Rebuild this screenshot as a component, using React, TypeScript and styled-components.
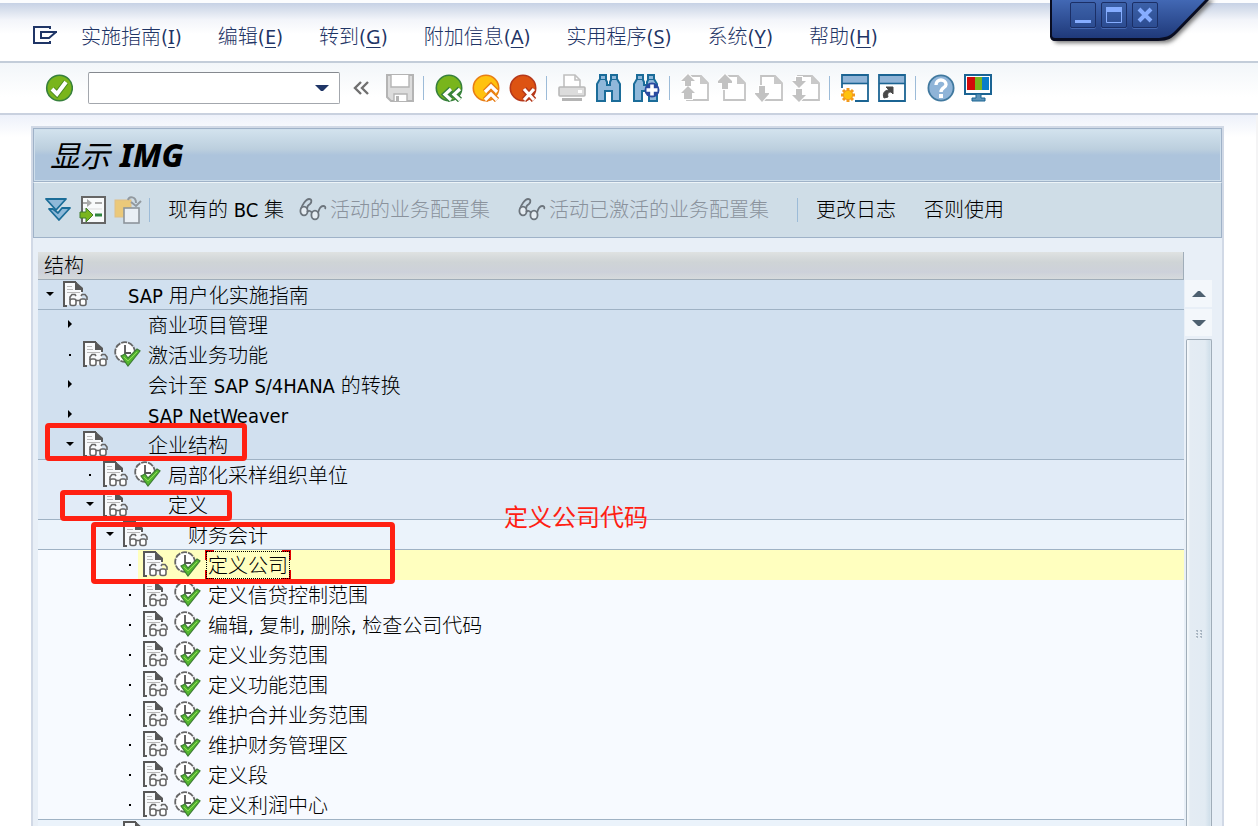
import React from 'react';
import styled, { createGlobalStyle, css } from 'styled-components';

const GlobalStyle = createGlobalStyle`
  * { box-sizing: border-box; }
  body { margin: 0; background: #fff; }
  button {
    font: inherit; color: inherit; background: none; border: 0; padding: 0;
    display: inline-flex; align-items: center; justify-content: center; flex: none;
  }
  ul { list-style: none; margin: 0; padding: 0; }
  svg { display: block; flex: none; }
`;

const Screen = styled.div`
  position: relative;
  height: 100vh;
  overflow: hidden;
  display: flex;
  flex-direction: column;
  font: 300 20px/30px 'DejaVu Sans Condensed', 'Noto Sans CJK SC', sans-serif;
  color: #000;
  white-space: nowrap;
`;

const MenuBar = styled.nav`
  flex: none;
  height: 63px;
  padding: 12px 31px 0;
  display: flex;
  align-items: center;
  gap: 36px;
  color: #1f3566;
  border-bottom: 2px solid #c3cdd9;
  background: linear-gradient(#fbfcfe 0 3px, #c6d1e5 3px, #dbe2ee 11px, #f3f5fa 20px, #fff 34px);
`;

const MenuIcon = styled.button`
  width: 28px;
  margin: 0 -14px 4px 0;
`;

const AccessKey = styled.u`
  font-family: 'Noto Sans', sans-serif;
  font-weight: 400;
  text-decoration-thickness: 1px;
  text-underline-offset: 3px;
`;

const Toolbar = styled.div`
  flex: none;
  height: 52px;
  padding: 0 32px 0 45px;
  display: flex;
  align-items: center;
  gap: 9px;
  border-bottom: 2px solid #c9d1df;
  background: linear-gradient(#f2f6f9, #fff 34px);
`;

const IconButton = styled.button`
  width: 28px;
  height: 30px;
`;

const CommandBox = styled.div`
  flex: none;
  display: flex;
  align-items: center;
  width: 252px;
  height: 32px;
  margin: 0 4px 0 6px;
  padding-right: 10px;
  background: #fff;
  border: 1px solid #a3a7ad;
  border-top-color: #85898f;
  border-radius: 2px;
`;

const CommandInput = styled.input`
  flex: 1;
  min-width: 0;
  height: 28px;
  padding: 0 8px;
  border: 0;
  outline: 0;
  background: transparent;
  font: inherit;
`;

const CollapseButton = styled.button`
  width: 17px;
  height: 30px;
  margin-right: 7px;
`;

const Separator = styled.span`
  flex: none;
  width: 3px;
  height: 24px;
  border-left: 1px solid #9cbbd8;
`;

const Workspace = styled.main`
  flex: 1;
  min-height: 0;
  display: flex;
  padding: 11px 32px 0 31px;
  background: linear-gradient(#edf1fa, #fff 22px);
  border-right: 2px solid #f4f4f5;
`;

const Panel = styled.section`
  flex: 1;
  min-width: 0;
  display: flex;
  flex-direction: column;
  border: solid #d1d9e6;
  border-width: 2px 2px 0;
  background: #e8eff7;
`;

const TitleBar = styled.header`
  flex: none;
  height: 54px;
  padding: 0 16px;
  display: flex;
  align-items: center;
  border: 1px solid #9fb2c8;
  box-shadow: inset 0 0 0 1px #cfdfec;
  background: linear-gradient(#d3e3ee, #bccfde 20px, #adc4dc 26px, #adc4dc);
`;

const Title = styled.h1`
  margin: 0;
  padding-bottom: 2px;
  display: flex;
  align-items: baseline;
  gap: 10px;
  font: italic 400 30px/50px 'Noto Sans CJK SC', sans-serif;
  b { font-family: 'Noto Sans', sans-serif; font-weight: 800; font-size: 32px; }
`;

const ActionBar = styled.div`
  flex: none;
  height: 56px;
  padding: 0 10px;
  display: flex;
  align-items: center;
  gap: 7px;
  border: 1px solid #9fb2c8;
  border-top-color: #edf4f8;
  background: #cfdde7;
`;

const ActionGap = styled.span`
  width: 2px;
`;

const ActionButton = styled.button<{ $muted?: boolean; $wide?: boolean }>`
  height: 30px;
  gap: 3px;
  margin-right: ${(p) => (p.$wide ? 21 : 8)}px;
  color: ${(p) => (p.$muted ? '#8a929c' : '#000')};
`;

const Content = styled.div`
  flex: 1;
  min-height: 0;
  display: flex;
  padding: 14px 10px 0 5px;
`;

const Tree = styled.div`
  flex: 1;
  min-width: 0;
  display: flex;
  flex-direction: column;
`;

const TreeHeader = styled.div`
  flex: none;
  height: 28px;
  padding-left: 6px;
  line-height: 28px;
  border: solid #a0adb9;
  border-width: 0 1px 1px 0;
  background: linear-gradient(#dfe2e2, #cfd4d6 10px, #cdd1da 20px, #d6dadc);
`;

const TreeBody = styled.div`
  position: relative;
  flex: 1;
  min-height: 0;
`;

const levelColor = { base: '#d1e0ef', mid: '#e1ebf7', soft: '#ebf3fb', leaf: '#f7faff' };
type Tone = keyof typeof levelColor;

const Row = styled.li<{ $level: number; $tone: Tone; $line?: boolean; $selected?: boolean }>`
  height: 30px;
  display: flex;
  align-items: center;
  padding-left: ${(p) => p.$level * 20}px;
  background: ${(p) =>
    p.$selected
      ? `linear-gradient(to right, ${levelColor[p.$tone]} 100px, #ffffbf 100px)`
      : levelColor[p.$tone]};
  ${(p) => p.$line && css`box-shadow: inset 0 -1px #9fb2c4;`}
`;

const Expander = styled.button`
  width: 24px;
  height: 28px;
  align-self: flex-start;
`;

const Slot = styled.span`
  flex: none;
  display: flex;
  width: 31px;
  height: 28px;
  padding-left: 1px;
`;

const RowText = styled.span<{ $focused?: boolean }>`
  height: 30px;
  margin-left: 1px;
  padding: 2px 3px 0;
  line-height: 28px;
  ${(p) =>
    p.$focused &&
    css`
      outline: 1px dotted #000;
      outline-offset: -2px;
      background:
        linear-gradient(#e00000, #e00000) 0 0 / 9px 2px,
        linear-gradient(#e00000, #e00000) 0 0 / 2px 10px,
        linear-gradient(#e00000, #e00000) 100% 0 / 9px 2px,
        linear-gradient(#e00000, #e00000) 100% 0 / 2px 10px,
        linear-gradient(#e00000, #e00000) 0 100% / 9px 2px,
        linear-gradient(#e00000, #e00000) 0 100% / 2px 10px,
        linear-gradient(#e00000, #e00000) 100% 100% / 9px 2px,
        linear-gradient(#e00000, #e00000) 100% 100% / 2px 10px;
      background-repeat: no-repeat;
    `}
`;

const Mark = styled.div<{ $x: number; $y: number; $w: number; $h: number }>`
  position: absolute;
  left: ${(p) => p.$x}px;
  top: ${(p) => p.$y}px;
  width: ${(p) => p.$w}px;
  height: ${(p) => p.$h}px;
  border: 5px solid #ff2012;
  border-radius: 4px;
`;

const Note = styled.div`
  position: absolute;
  left: 466px;
  top: 222px;
  font-size: 24px;
  font-weight: 400;
  line-height: 32px;
  color: #ff2012;
`;

const ScrollBar = styled.div`
  flex: none;
  width: 28px;
  padding: 28px 0 0 1px;
  display: flex;
  flex-direction: column;
  gap: 2px;
`;

const ScrollButton = styled.button`
  width: 27px;
  height: 27px;
  background: #f3f7fb;
`;

const Thumb = styled.div`
  flex: 1;
  margin: 1px 0 0 1px;
  padding-top: 290px;
  display: flex;
  justify-content: center;
  border: 1px solid #a0adb9;
  border-bottom: 0;
  border-radius: 2px 2px 0 0;
  background: linear-gradient(to right, #f4f8fb 1px, #e4ecf3 3px, #e2ebf3 18px, #d0dfea 23px, #e4ecf3);
`;

const WindowTab = styled.div`
  position: absolute;
  top: 0;
  right: 40px;
  width: 168px;
  height: 48px;
`;

const TabShape = styled.svg`
  position: absolute;
  inset: 0;
`;

const WindowButtons = styled.div`
  position: relative;
  display: flex;
  gap: 5px;
  padding: 2px 0 0 20px;
`;

const WindowButton = styled.button`
  width: 26px;
  height: 26px;
  border: 1px solid #1b2f66;
  border-radius: 2px;
  background: linear-gradient(#3c61a8, #2c4c91);
  box-shadow: 0 1px #4568b0;
`;

/* ---------- icons ---------- */

const DocIcon = () => (
  <svg width="25" height="26" viewBox="0 0 25 26">
    <path d="M1 1H13L19 7V24H1Z" fill="#f8fafc" />
    <path d="M4 25H1V1H13M13 1V8H19M19 7V11" fill="none" stroke="#585858" strokeWidth="2" />
    <path d="M12 0L20 7V9H12Z" fill="#585858" />
    <path d="M4 5.500H9M4 8.500H10M4 11.500H17" stroke="#b9b9b9" strokeWidth="1" />
    <path d="M7 19V16L9 13.500H12L13 15M24 19V16L22 13.500H19L18 15M13 19.500H17" fill="none" stroke="#666" strokeWidth="1.6" />
    <rect x="7" y="18" width="6" height="6.500" rx="2" fill="#fff" stroke="#666" strokeWidth="1.6" />
    <rect x="17" y="18" width="6" height="6.500" rx="2" fill="#fff" stroke="#666" strokeWidth="1.6" />
  </svg>
);

const ClockIcon = () => (
  <svg width="27" height="26" viewBox="0 0 27 26">
    <circle cx="11" cy="11" r="9.800" fill="#fff" stroke="#666" strokeWidth="1.8" strokeDasharray="6 1" />
    <path d="M11 4V12H17" fill="none" stroke="#555" strokeWidth="1.8" />
    <path d="M7 15L11 13L14 17L23 8L26 10L14 25Z" fill="#55b82f" stroke="#3d7a35" strokeWidth="1.2" />
    <path d="M10 16L14 20L23 11" fill="none" stroke="#8ddc55" strokeWidth="1" />
  </svg>
);

const GlassesIcon = () => (
  <svg width="28" height="26" viewBox="0 0 28 26">
    <g fill="none" stroke="#6c747c" strokeWidth="1.8">
      <path d="M2 12C3 8 7 2 10 2C13 2 13 5 11 7C9 8 8 10 8 12" />
      <path d="M19 16C20 12 21 9 24 9C26 9 27 10 26 12" />
      <ellipse cx="5" cy="14" rx="3.600" ry="4.400" fill="#e6edf3" />
      <ellipse cx="16" cy="18" rx="3.600" ry="4.400" fill="#e6edf3" />
      <path d="M8 15C10 13 12 14 13 16" />
    </g>
  </svg>
);

const CheckIcon = () => (
  <svg width="28" height="28" viewBox="0 0 28 28">
    <circle cx="14.500" cy="14" r="12.800" fill="#79b51c" stroke="#37803c" strokeWidth="1.6" />
    <path d="M7 15L12 20L21 8" fill="none" stroke="#4b8a20" strokeWidth="6" />
    <path d="M7 15L12 20L21 8" fill="none" stroke="#fff" strokeWidth="4" />
  </svg>
);

const SaveIcon = () => (
  <svg width="28" height="28" viewBox="0 0 28 28">
    <path d="M1 1H27V27H5L1 23Z" fill="#dcdcdc" stroke="#b4b4b4" strokeWidth="2" />
    <path d="M5 1V13H23V1M8 27V20H21V27" fill="#fff" stroke="#b4b4b4" strokeWidth="1.4" />
    <rect x="10" y="22" width="3" height="5" fill="#b4b4b4" />
  </svg>
);

const RoundIcon = ({ kind }: { kind: 'back' | 'up' | 'cancel' }) => {
  const tone = {
    back: ['#79b51c', '#37803c'],
    up: ['#ffc20e', '#e87d14'],
    cancel: ['#dd5312', '#b5381a'],
  }[kind];
  const mark = {
    back: 'M16 15L10 20.500L16 26M25 15L19 20.500L25 26',
    up: 'M13 18L19 12L25 18M13 26L19 20L25 26',
    cancel: 'M15 15L25 26M25 15L15 26',
  }[kind];
  return (
    <svg width="28" height="28" viewBox="0 0 28 28">
      <circle cx="14" cy="14" r="12.700" fill={tone[0]} stroke={tone[1]} strokeWidth="1.6" />
      <path d={mark} fill="none" stroke={tone[1]} strokeWidth="6" />
      <path d={mark} fill="none" stroke="#fff" strokeWidth="3.2" />
    </svg>
  );
};

const PrintIcon = () => (
  <svg width="28" height="28" viewBox="0 0 28 28">
    <path d="M6 13V1H17L22 6V13" fill="#fff" stroke="#c0c0c0" strokeWidth="1.6" />
    <path d="M17 1V6H22" fill="none" stroke="#c0c0c0" strokeWidth="1.6" />
    <rect x="1" y="13" width="26" height="9" rx="1" fill="#dcdcdc" stroke="#b8b8b8" strokeWidth="1.6" />
    <rect x="20" y="16" width="4" height="3" fill="#fff" />
    <path d="M4 25.500H24" stroke="#b4b4b4" strokeWidth="3" />
  </svg>
);

const FindIcon = ({ plus }: { plus?: boolean }) => (
  <svg width="28" height="28" viewBox="0 0 28 28">
    <path
      d="M5 1H11V6L12 8V11H15V8L16 6V1H22V5L25 10V27H17V17H10V27H2V10L5 5Z"
      fill="#90b8da" stroke="#1b6c99" strokeWidth="2"
    />
    <path d="M5 5.500H11M16 5.500H22" stroke="#1b6c99" strokeWidth="1" />
    {plus && (
      <>
        <circle cx="20" cy="16" r="7.500" fill="#2a4ba0" />
        <path d="M20 10.500V21.500M14.500 16H25.500" stroke="#fff" strokeWidth="3.6" />
      </>
    )}
  </svg>
);

const PageIcon = ({ kind }: { kind: 'first' | 'prev' | 'next' | 'last' }) => {
  const arrows = {
    first: 'M7 0L14 7H10V12H4V7H0ZM7 12L14 19H11V25H3V19H0Z',
    prev: 'M7 0L14 7V9H10V15H4V9H0V7Z',
    next: 'M7 28L14 20V19H10V12H4V19H0V20Z',
    last: 'M7 14L14 7H10V3H4V7H0ZM7 28L14 21H10V15H4V21H0Z',
  }[kind];
  return (
    <svg width="28" height="28" viewBox="0 0 28 28">
      <path d="M6 26V2H20L27 9V26Z" fill="#fff" stroke="#c4c4c4" strokeWidth="1.8" />
      <path d="M19 1L28 10H19Z" fill="#c9c9c9" />
      <path d={arrows} fill="#c2c2c2" stroke="#fff" strokeWidth="2" paintOrder="stroke" />
    </svg>
  );
};

const SessionIcon = ({ shortcut }: { shortcut?: boolean }) => (
  <svg width="28" height="28" viewBox="0 0 28 28">
    <path d="M1 1H27V27H1Z" fill="#fff" stroke="#1b6493" strokeWidth="1.8" />
    <path d="M2 2H26V9H2Z" fill="#90b4d7" />
    <path d="M1 9.500H27" stroke="#1b6493" strokeWidth="1.6" />
    {shortcut ? (
      <path d="M6 24C4 19 7 16 11 16L8 13H15V20L13 18C10 18 9 20 10 23Z" fill="#484848" stroke="#484848" />
    ) : (
      <>
        <path d="M0 14H14V28H0Z" fill="#fff" />
        <path d="M7 14V28M0 21H14M2 16L12 26M12 16L2 26" stroke="#f39a1c" strokeWidth="3" />
        <circle cx="7" cy="21" r="4.600" fill="#ffc20e" stroke="#f39a1c" />
      </>
    )}
  </svg>
);

const HelpIcon = () => (
  <svg width="28" height="28" viewBox="0 0 28 28">
    <circle cx="14" cy="14" r="12.600" fill="#8fb4d8" stroke="#41799f" strokeWidth="1.8" />
    <path d="M9 11C9 4 19 5 19 10.500C19 14 14 13.500 14 18" fill="none" stroke="#fff" strokeWidth="3.4" />
    <rect x="12" y="20" width="4" height="4" fill="#fff" />
  </svg>
);

const MonitorIcon = () => (
  <svg width="28" height="28" viewBox="0 0 28 28">
    <rect x="1" y="1" width="26" height="19" fill="#fff" stroke="#1b6493" strokeWidth="2" />
    <rect x="3" y="3" width="8" height="13" fill="#d20a0a" />
    <rect x="11" y="3" width="7" height="13" fill="#79b51c" />
    <rect x="18" y="3" width="7" height="13" fill="#0a7dc8" />
    <path d="M12 20H17V24H21V27H8V24H12Z" fill="#5d93b8" stroke="#1b6493" />
  </svg>
);

const ExpandAllIcon = () => (
  <svg width="26" height="28" viewBox="0 0 26 28">
    <g fill="#8fb9d9" stroke="#1b6d98" strokeWidth="1.8" strokeLinejoin="round">
      <path d="M1 3H21L11 14Z" />
      <path d="M4 13L8 13L13 17L17 12H25L14 24Z" />
    </g>
  </svg>
);

const PositionIcon = () => (
  <svg width="28" height="28" viewBox="0 0 28 28">
    <rect x="3" y="1" width="23" height="26" fill="#f8fafb" stroke="#666" strokeWidth="2" />
    <path d="M4 7H11M16 7H23" stroke="#aaa" strokeWidth="2" />
    <path d="M8 3L13 7L8 11Z" fill="#aaa" />
    <path d="M4 13H23" stroke="#ddd" strokeWidth="1" />
    <path d="M16 19H23" stroke="#2e8440" strokeWidth="3" />
    <path d="M1 16H7V12L14 19L7 26V22H1Z" fill="#7ab51d" stroke="#3f7d2b" strokeWidth="1" />
  </svg>
);

const CopyIcon = () => (
  <svg width="28" height="28" viewBox="0 0 28 28">
    <rect x="1" y="4" width="16" height="17" fill="#ebc97a" stroke="#dfc088" strokeWidth="1" />
    <path d="M14 4C15 0 22 0 22 7" fill="none" stroke="#92999f" strokeWidth="2" />
    <path d="M17 6L22 10L27 5" fill="none" stroke="#92999f" strokeWidth="2" />
    <rect x="10" y="12" width="15" height="15" fill="#e9eff5" stroke="#8d949b" strokeWidth="1.6" />
  </svg>
);

const Triangle = ({ dir }: { dir: 'down' | 'right' | 'dot' }) => (
  <svg width="8" height="8" viewBox="0 0 8 8">
    {dir === 'down' && <path d="M0 2H8L4 6Z" />}
    {dir === 'right' && <path d="M2 0L6 4L2 8Z" />}
    {dir === 'dot' && <rect x="3" y="4" width="2" height="2" />}
  </svg>
);

/* ---------- data ---------- */

const menus: [string, string][] = [
  ['实施指南', 'I'],
  ['编辑', 'E'],
  ['转到', 'G'],
  ['附加信息', 'A'],
  ['实用程序', 'S'],
  ['系统', 'Y'],
  ['帮助', 'H'],
];

interface Node {
  text: string;
  level: number;
  tone: Tone;
  mark: 'down' | 'right' | 'dot';
  doc?: boolean;
  clock?: boolean;
  line?: boolean;
  selected?: boolean;
}

const leaf = (text: string, extra: Partial<Node> = {}): Node => ({
  text, level: 4, tone: 'leaf', mark: 'dot', doc: true, clock: true, ...extra,
});

const nodes: Node[] = [
  { text: 'SAP 用户化实施指南', level: 0, tone: 'base', mark: 'down', doc: true, line: true },
  { text: '商业项目管理', level: 1, tone: 'base', mark: 'right' },
  { text: '激活业务功能', level: 1, tone: 'base', mark: 'dot', doc: true, clock: true },
  { text: '会计至 SAP S/4HANA 的转换', level: 1, tone: 'base', mark: 'right' },
  { text: 'SAP NetWeaver', level: 1, tone: 'base', mark: 'right' },
  { text: '企业结构', level: 1, tone: 'base', mark: 'down', doc: true, line: true },
  { text: '局部化采样组织单位', level: 2, tone: 'mid', mark: 'dot', doc: true, clock: true },
  { text: '定义', level: 2, tone: 'mid', mark: 'down', doc: true, line: true },
  { text: '财务会计', level: 3, tone: 'soft', mark: 'down', doc: true, line: true },
  leaf('定义公司', { selected: true }),
  leaf('定义信贷控制范围'),
  leaf('编辑, 复制, 删除, 检查公司代码'),
  leaf('定义业务范围'),
  leaf('定义功能范围'),
  leaf('维护合并业务范围'),
  leaf('维护财务管理区'),
  leaf('定义段'),
  leaf('定义利润中心', { line: true }),
  { text: '', level: 3, tone: 'soft', mark: 'right', doc: true },
];

const Tool = ({ label, children }: { label: string; children: React.ReactNode }) => (
  <IconButton type="button" aria-label={label}>{children}</IconButton>
);

export default function App() {
  return (
    <Screen>
      <GlobalStyle />
      <MenuBar>
        <MenuIcon type="button" aria-label="菜单">
          <svg width="26" height="20" viewBox="0 0 26 20">
            <path d="M18 4V2H2V18H18V16" fill="none" stroke="#1f3566" strokeWidth="2" />
            <path d="M25 7H9V13H17L24 7" fill="none" stroke="#1f3566" strokeWidth="2" />
          </svg>
        </MenuIcon>
        {menus.map(([name, key]) => (
          <button type="button" key={name}>
            {name}(<AccessKey>{key}</AccessKey>)
          </button>
        ))}
      </MenuBar>

      <Toolbar>
        <Tool label="回车"><CheckIcon /></Tool>
        <CommandBox>
          <CommandInput aria-label="命令" />
          <button type="button" aria-label="历史">
            <svg width="14" height="8" viewBox="0 0 14 8">
              <path d="M0 1H14L8 7H6Z" fill="#1f3566" />
            </svg>
          </button>
        </CommandBox>
        <CollapseButton type="button" aria-label="收起">
          <svg width="17" height="14" viewBox="0 0 17 14">
            <path d="M8 1L2 7L8 13M15 1L9 7L15 13" fill="none" stroke="#707070" strokeWidth="2.4" />
          </svg>
        </CollapseButton>
        <Tool label="保存"><SaveIcon /></Tool>
        <Separator />
        <Tool label="返回"><RoundIcon kind="back" /></Tool>
        <Tool label="退出"><RoundIcon kind="up" /></Tool>
        <Tool label="取消"><RoundIcon kind="cancel" /></Tool>
        <Separator />
        <Tool label="打印"><PrintIcon /></Tool>
        <Tool label="查找"><FindIcon /></Tool>
        <Tool label="继续查找"><FindIcon plus /></Tool>
        <Separator />
        <Tool label="第一页"><PageIcon kind="first" /></Tool>
        <Tool label="上一页"><PageIcon kind="prev" /></Tool>
        <Tool label="下一页"><PageIcon kind="next" /></Tool>
        <Tool label="最后一页"><PageIcon kind="last" /></Tool>
        <Separator />
        <Tool label="新建会话"><SessionIcon /></Tool>
        <Tool label="快捷方式"><SessionIcon shortcut /></Tool>
        <Separator />
        <Tool label="帮助"><HelpIcon /></Tool>
        <Tool label="布局"><MonitorIcon /></Tool>
      </Toolbar>

      <Workspace>
        <Panel>
          <TitleBar>
            <Title>显示 <b>IMG</b></Title>
          </TitleBar>
          <ActionBar>
            <Tool label="全部展开"><ExpandAllIcon /></Tool>
            <Tool label="定位"><PositionIcon /></Tool>
            <Tool label="复制"><CopyIcon /></Tool>
            <Separator />
            <ActionGap />
            <ActionButton type="button">现有的 BC 集</ActionButton>
            <ActionButton type="button" $muted $wide><GlassesIcon />活动的业务配置集</ActionButton>
            <ActionButton type="button" $muted $wide><GlassesIcon />活动已激活的业务配置集</ActionButton>
            <Separator />
            <ActionGap />
            <ActionButton type="button" $wide>更改日志</ActionButton>
            <ActionButton type="button">否则使用</ActionButton>
          </ActionBar>
          <Content>
            <Tree>
              <TreeHeader>结构</TreeHeader>
              <TreeBody>
                <ul>
                  {nodes.map((n, i) => (
                    <Row key={i} $level={n.level} $tone={n.tone} $line={n.line} $selected={n.selected}>
                      <Expander type="button" aria-label="展开"><Triangle dir={n.mark} /></Expander>
                      <Slot>{n.doc && <DocIcon />}</Slot>
                      <Slot>{n.clock && <ClockIcon />}</Slot>
                      <RowText $focused={n.selected}>{n.text}</RowText>
                    </Row>
                  ))}
                </ul>
                <Mark $x={7} $y={143} $w={202} $h={38} />
                <Mark $x={22} $y={210} $w={172} $h={31} />
                <Mark $x={53} $y={242} $w={304} $h={62} />
                <Note>定义公司代码</Note>
              </TreeBody>
            </Tree>
            <ScrollBar>
              <ScrollButton type="button" aria-label="向上滚动">
                <svg width="14" height="8" viewBox="0 0 14 8"><path d="M6 1H8L14 7H0Z" fill="#4d6070" /></svg>
              </ScrollButton>
              <ScrollButton type="button" aria-label="向下滚动">
                <svg width="14" height="8" viewBox="0 0 14 8"><path d="M0 1H14L8 7H6Z" fill="#4d6070" /></svg>
              </ScrollButton>
              <Thumb>
                <svg width="7" height="9" viewBox="0 0 7 9">
                  <path d="M0 1H2M4 1H6M0 4H2M4 4H6M0 7H2M4 7H6" stroke="#a8b5c2" strokeWidth="2" />
                  <path d="M0 2H1M4 2H5M0 5H1M4 5H5M0 8H1M4 8H5" stroke="#fff" strokeWidth="1" />
                </svg>
              </Thumb>
            </ScrollBar>
          </Content>
        </Panel>
      </Workspace>

      <WindowTab>
        <TabShape width="168" height="48" viewBox="0 0 168 48">
          <defs>
            <linearGradient id="tab" x1="0" y1="0" x2="0" y2="1">
              <stop offset="0" stopColor="#4268b4" />
              <stop offset="1" stopColor="#1f3979" />
            </linearGradient>
            <filter id="soft"><feGaussianBlur stdDeviation="2" /></filter>
          </defs>
          <path d="M3 0V38L6 43H114C122 43 126 38 130 34L164 0Z" fill="#777" filter="url(#soft)" />
          <path d="M0 0V36C0 39 2 41 5 41H108C118 41 122 38 127 33L159 0Z" fill="#090d22" />
          <path d="M2 0V35C2 37 3 38 5 38H106C115 38 120 36 125 31L155 0Z" fill="url(#tab)" />
        </TabShape>
        <WindowButtons>
          <WindowButton type="button" aria-label="最小化">
            <svg width="18" height="18" viewBox="0 0 18 18"><path d="M1 15.500H17" stroke="#86adff" strokeWidth="3" /></svg>
          </WindowButton>
          <WindowButton type="button" aria-label="最大化">
            <svg width="18" height="18" viewBox="0 0 18 18">
              <path d="M1.500 2V16.500H16.500V2" fill="none" stroke="#86adff" />
              <path d="M1 3.500H17" stroke="#86adff" strokeWidth="5" />
            </svg>
          </WindowButton>
          <WindowButton type="button" aria-label="关闭">
            <svg width="18" height="18" viewBox="0 0 18 18">
              <path d="M3 3L15 15M15 3L3 15" stroke="#86adff" strokeWidth="4" />
            </svg>
          </WindowButton>
        </WindowButtons>
      </WindowTab>
    </Screen>
  );
}
